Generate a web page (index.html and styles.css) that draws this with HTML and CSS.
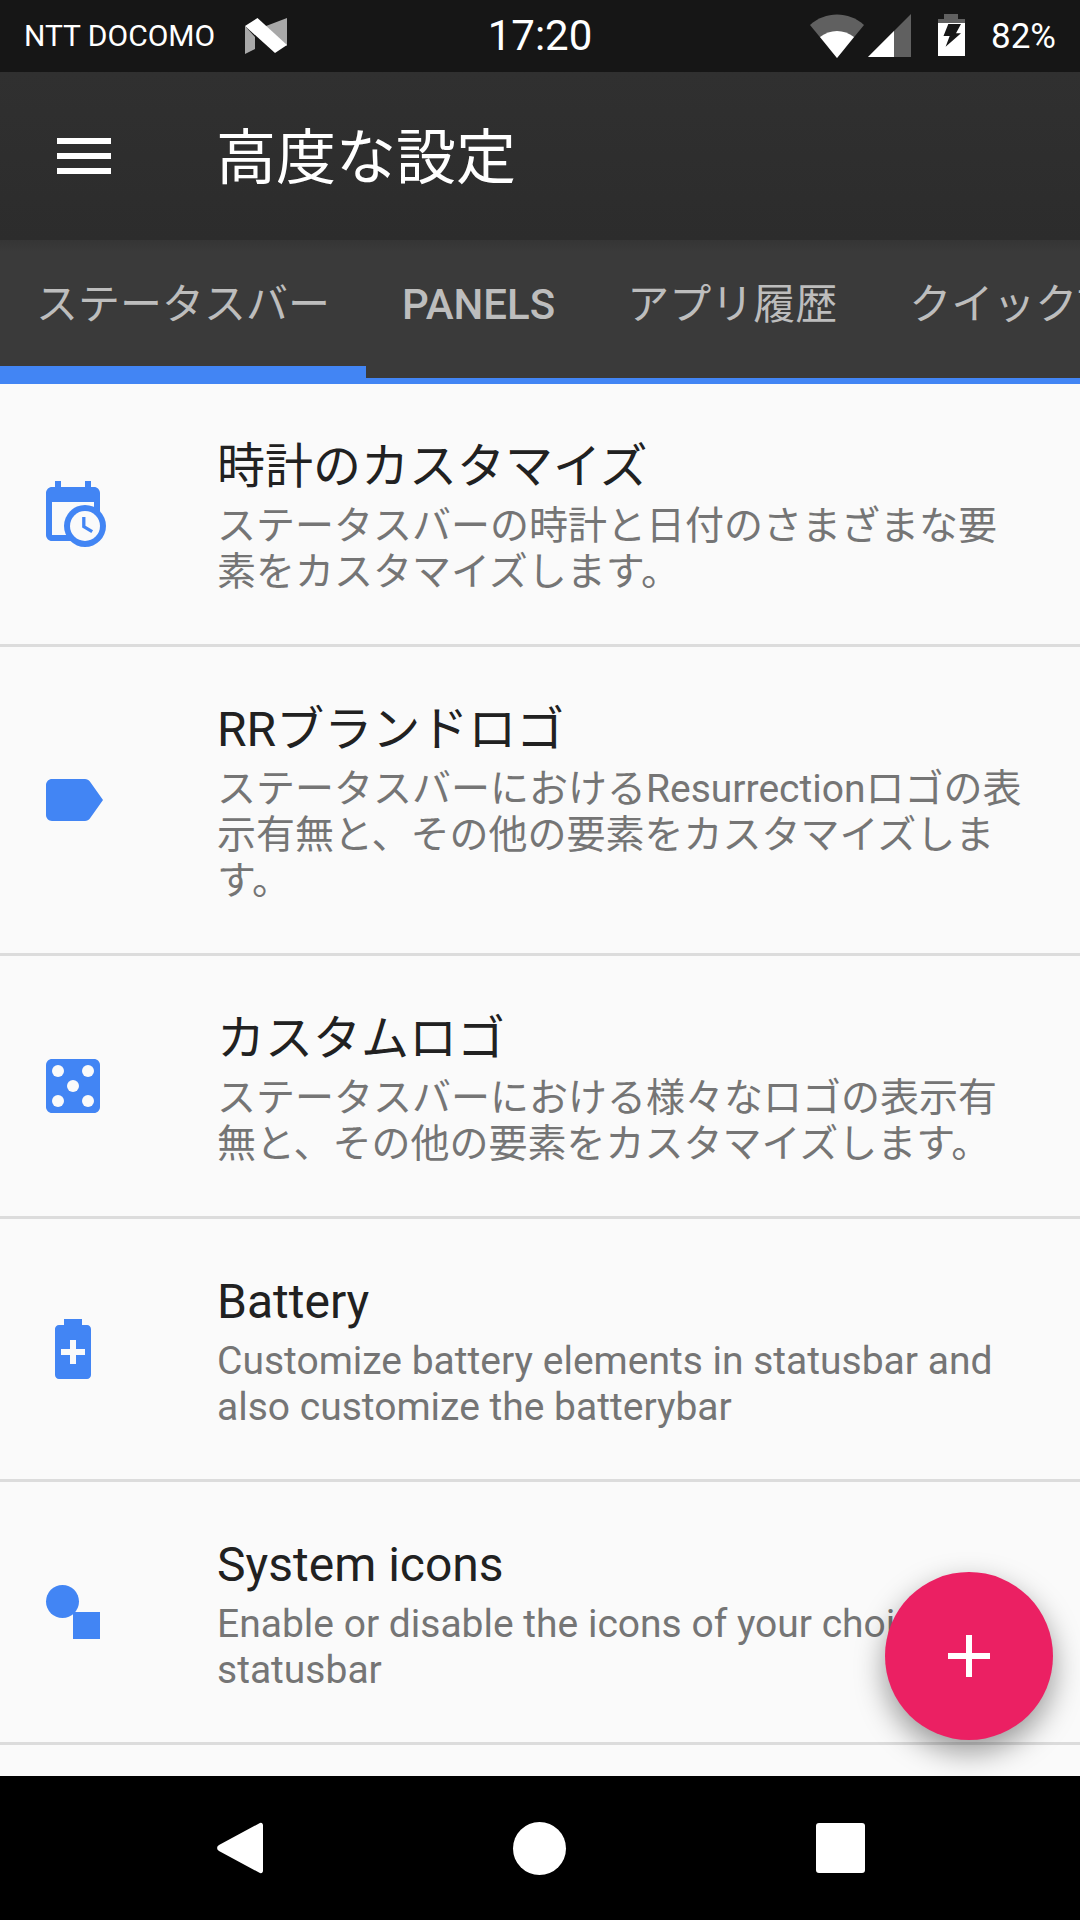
FILE: index.html
```html
<!DOCTYPE html>
<html lang="ja">
<head>
  <meta charset="UTF-8">
  <meta name="viewport" content="width=device-width, initial-scale=1.0">
  <title>高度な設定</title>
  <link rel="stylesheet" href="styles.css">
</head>
<body>
  <div class="phone">
    <div class="status-bar">
      <div class="status-left">
        <span class="carrier">NTT DOCOMO</span>
        <svg class="n-logo" width="42" height="36" viewBox="0 0 42 36">
          <polygon points="0,8 10,19 10,31 0,36" fill="#a8a8a8"/>
          <polygon points="21,8 42,0 42,28 21,9" fill="#a8a8a8"/>
          <polygon points="0,8 12.5,0 42,27 30,35" fill="#fff"/>
        </svg>
      </div>
      <span class="clock">17:20</span>
      <div class="status-right">
        <svg class="wifi-icon" width="54" height="44" viewBox="0 0 54 44">
          <path d="M0 11 C15 -3 39 -3 54 11 L27 44 Z" fill="#606060"/>
          <path d="M10 23 C20 15 34 15 44 23 L27 44 Z" fill="#fff"/>
        </svg>
        <svg class="signal-icon" width="43" height="43" viewBox="0 0 43 43">
          <polygon points="43,0 43,43 0,43" fill="#606060"/>
          <polygon points="26,17 26,43 0,43" fill="#fff"/>
        </svg>
        <svg class="battery-icon" width="27" height="42" viewBox="0 0 27 42">
          <path d="M6 0H20V5H27V42H0V5H6Z" fill="#606060"/>
          <rect x="0" y="9" width="27" height="33" fill="#fff"/>
          <polygon points="10.300,10 23,10 18,19.300 23,19.300 7.600,32.700 11.700,22 5.500,22" fill="#161616"/>
        </svg>
        <span class="percent">82%</span>
      </div>
    </div>

    <div class="toolbar">
      <div class="menu-icon"><span></span><span></span><span></span></div>
      <div class="toolbar-title">高度な設定</div>
    </div>

    <div class="tabs">
      <div class="tab tab-active">ステータスバー</div>
      <div class="tab tab-latin">PANELS</div>
      <div class="tab">アプリ履歴</div>
      <div class="tab">クイック設定</div>
    </div>

    <div class="content">
      <div class="row">
        <svg class="row-icon" viewBox="0 0 24 24">
          <path d="M6 1H8V3H16V1H18V3H19C20.1 3 21 3.9 21 5V19C21 20.1 20.1 21 19 21H5C3.9 21 3 20.1 3 19V5C3 3.9 3.9 3 5 3H6Z" fill="#4285f4"/>
          <rect x="5" y="8" width="14" height="11" fill="#fafafa"/>
          <circle cx="16" cy="16" r="7" fill="#4285f4"/>
          <circle cx="16" cy="16" r="5" fill="#fafafa"/>
          <path d="M15.6 13V16.2L18.4 17.9" fill="none" stroke="#4285f4" stroke-width="1.1"/>
        </svg>
        <div class="row-text">
          <div class="row-title">時計のカスタマイズ</div>
          <div class="row-desc">ステータスバーの時計と日付のさまざまな要素をカスタマイズします。</div>
        </div>
      </div>
      <div class="row row-tall">
        <svg class="row-icon" viewBox="0 0 24 24">
          <path d="M17.63 5.84C17.27 5.33 16.67 5 16 5L5 5.01C3.9 5.01 3 5.9 3 7V17C3 18.1 3.9 18.99 5 18.99L16 19C16.67 19 17.27 18.67 17.63 18.16L22 12Z" fill="#4285f4"/>
        </svg>
        <div class="row-text">
          <div class="row-title">RRブランドロゴ</div>
          <div class="row-desc">ステータスバーにおけるResurrectionロゴの表示有無と、その他の要素をカスタマイズします。</div>
        </div>
      </div>
      <div class="row">
        <svg class="row-icon" viewBox="0 0 24 24">
          <path d="M5 3H19C20.1 3 21 3.9 21 5V19C21 20.1 20.1 21 19 21H5C3.9 21 3 20.1 3 19V5C3 3.9 3.9 3 5 3Z" fill="#4285f4"/>
          <circle cx="7" cy="7" r="2" fill="#fafafa"/>
          <circle cx="17" cy="7" r="2" fill="#fafafa"/>
          <circle cx="12" cy="12" r="2" fill="#fafafa"/>
          <circle cx="7" cy="17" r="2" fill="#fafafa"/>
          <circle cx="17" cy="17" r="2" fill="#fafafa"/>
        </svg>
        <div class="row-text">
          <div class="row-title">カスタムロゴ</div>
          <div class="row-desc">ステータスバーにおける様々なロゴの表示有無と、その他の要素をカスタマイズします。</div>
        </div>
      </div>
      <div class="row">
        <svg class="row-icon" viewBox="0 0 24 24">
          <path d="M16.67 4H15V2H9V4H7.33C6.6 4 6 4.6 6 5.33V20.67C6 21.4 6.6 22 7.33 22H16.67C17.4 22 18 21.4 18 20.67V5.33C18 4.6 17.4 4 16.67 4Z" fill="#4285f4"/>
          <path d="M11 9H13V12H16V14H13V17H11V14H8V12H11Z" fill="#fafafa"/>
        </svg>
        <div class="row-text">
          <div class="row-title">Battery</div>
          <div class="row-desc">Customize battery elements in statusbar and also customize the batterybar</div>
        </div>
      </div>
      <div class="row">
        <svg class="row-icon" viewBox="0 0 24 24">
          <circle cx="8.5" cy="8.5" r="5.5" fill="#4285f4"/>
          <rect x="12" y="12" width="9" height="9" fill="#4285f4"/>
        </svg>
        <div class="row-text">
          <div class="row-title">System icons</div>
          <div class="row-desc">Enable or disable the icons of your choice in statusbar</div>
        </div>
      </div>

      <div class="fab"><span class="fab-h"></span><span class="fab-v"></span></div>
    </div>

    <div class="nav-bar">
      <svg class="nav-back" width="46" height="52" viewBox="0 0 46 52">
        <path d="M42 1.5C44 0 46 1 46 3.500V48.500C46 51 44 52 42 50.500L2 29C-0.500 27.500 -0.500 24.500 2 23Z" fill="#fff"/>
      </svg>
      <div class="nav-home"></div>
      <div class="nav-recent"></div>
    </div>
  </div>
</body>
</html>
```

FILE: styles.css
```css
* {
  box-sizing: border-box;
}

body {
  margin: 0;
  font-family: Roboto, "Noto Sans CJK JP", sans-serif;
  background: #000;
}

.phone {
  width: 1080px;
  height: 1920px;
  display: flex;
  flex-direction: column;
  overflow: hidden;
}

/* status bar */
.status-bar {
  height: 72px;
  flex: none;
  background: #161616;
  color: #fff;
  display: flex;
  align-items: center;
  justify-content: space-between;
  position: relative;
  padding: 0 24px;
}

.status-left {
  display: flex;
  align-items: center;
  width: 400px;
}

.carrier {
  font-size: 30px;
  line-height: 74px;
}

.n-logo {
  margin-left: 30px;
}

.clock {
  font-size: 42px;
  line-height: 74px;
}

.status-right {
  display: flex;
  align-items: flex-start;
  justify-content: flex-end;
  width: 400px;
  height: 72px;
  padding-top: 14px;
}

.signal-icon {
  margin-left: 4px;
}

.battery-icon {
  margin-left: 27px;
}

.percent {
  font-size: 35px;
  line-height: 46px;
  margin-left: 26px;
}

/* toolbar */
.toolbar {
  height: 168px;
  flex: none;
  background: linear-gradient(#303030, #2c2c2c);
  display: flex;
  align-items: center;
  padding-left: 57px;
}

.menu-icon {
  width: 54px;
  height: 36px;
  display: flex;
  flex-direction: column;
  justify-content: space-between;
}

.menu-icon span {
  height: 6px;
  background: #fff;
}

.toolbar-title {
  font-size: 60px;
  line-height: 72px;
  color: #fff;
  margin-left: 105px;
  margin-top: 5px;
}

/* tabs */
.tabs {
  height: 144px;
  flex: none;
  background: linear-gradient(#353535, #3a3a3a 12px);
  border-bottom: 6px solid #4285f4;
  display: flex;
  overflow: hidden;
  position: relative;
}

.tab {
  flex: none;
  padding: 0 36px;
  font-size: 42px;
  line-height: 130px;
  color: #bdbdbd;
  position: relative;
}

.tab-latin {
  font-weight: 500;
}

.tab-active::after {
  content: "";
  position: absolute;
  left: 0;
  right: 0;
  bottom: 0;
  height: 12px;
  background: #4285f4;
}

/* list */
.content {
  flex: 1;
  background: #fafafa;
  position: relative;
  overflow: hidden;
}

.row {
  height: 263px;
  display: flex;
  align-items: center;
  border-bottom: 3px solid #dcdcdc;
  padding-left: 37px;
}

.row-tall {
  height: 309px;
}

.row-icon {
  width: 72px;
  height: 72px;
  flex: none;
}

.row-text {
  width: 818px;
  margin-left: 108px;
  padding-top: 2px;
}

.row-title {
  font-size: 48px;
  line-height: 64px;
  color: #212121;
}

.row-desc {
  font-size: 39px;
  line-height: 46px;
  margin-top: 4px;
  color: #757575;
}

.fab {
  position: absolute;
  right: 27px;
  bottom: 36px;
  width: 168px;
  height: 168px;
  border-radius: 50%;
  background: #eb2063;
  box-shadow: 0 12px 30px rgba(0, 0, 0, 0.4);
}

.fab-h,
.fab-v {
  position: absolute;
  background: #fff;
}

.fab-h {
  left: 63px;
  top: 81px;
  width: 42px;
  height: 6px;
}

.fab-v {
  left: 81px;
  top: 63px;
  width: 6px;
  height: 42px;
}

/* navigation */
.nav-bar {
  height: 144px;
  flex: none;
  background: #000;
  display: flex;
  align-items: center;
  padding: 0 0 0 217px;
  position: relative;
}

.nav-back {
  flex: none;
}

.nav-home {
  width: 53px;
  height: 53px;
  flex: none;
  border-radius: 50%;
  background: #fff;
  margin-left: 250px;
}

.nav-recent {
  width: 49px;
  height: 50px;
  flex: none;
  border-radius: 3px;
  background: #fff;
  margin-left: 250px;
}
```
